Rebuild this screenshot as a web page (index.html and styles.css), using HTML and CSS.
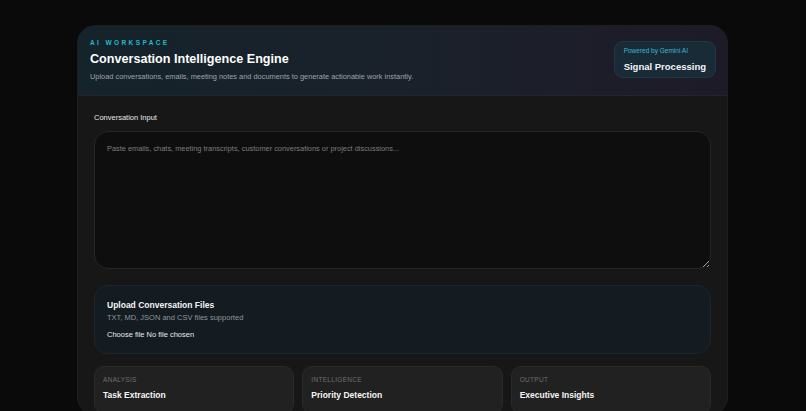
FILE: index.html
```html
<!DOCTYPE html>
<html lang="en">

<head>
  <meta charset="UTF-8">
  <meta name="viewport" content="width=device-width, initial-scale=1.0">
  <title>Conversation Intelligence Engine</title>

  <!-- Internal CSS file -->
  <link rel="stylesheet" href="styles.css">
</head>

<body>
  <main class="workspace">
    <header class="workspace-header">
      <div class="intro">
        <p class="eyebrow">AI WORKSPACE</p>
        <h1>Conversation Intelligence Engine</h1>
        <p class="lead">Upload conversations, emails, meeting notes and documents to generate actionable work instantly.</p>
      </div>
      <div class="badge">
        <span class="badge-small">Powered by Gemini AI</span>
        <span class="badge-title">Signal Processing</span>
      </div>
    </header>

    <section class="workspace-body">
      <label class="field-label" for="conversation">Conversation Input</label>
      <textarea id="conversation" class="conversation" placeholder="Paste emails, chats, meeting transcripts, customer conversations or project discussions..."></textarea>

      <div class="upload">
        <h2>Upload Conversation Files</h2>
        <p>TXT, MD, JSON and CSV files supported</p>
        <div class="file-row">Choose file No file chosen</div>
      </div>

      <div class="features">
        <div class="feature">
          <span class="feature-label">ANALYSIS</span>
          <span class="feature-title">Task Extraction</span>
        </div>
        <div class="feature">
          <span class="feature-label">INTELLIGENCE</span>
          <span class="feature-title">Priority Detection</span>
        </div>
        <div class="feature">
          <span class="feature-label">OUTPUT</span>
          <span class="feature-title">Executive Insights</span>
        </div>
      </div>
    </section>
  </main>
</body>

</html>
```

FILE: styles.css
```css
html {
  padding: 0;
  margin: 0;
  background: #0a0a0b;
}

body {
  margin: 0;
  padding: 25px 0 0 77px;
  font-family: "Liberation Sans", Arial, sans-serif;
  color: #f3f4f6;
  overflow: hidden;
}

.workspace {
  box-sizing: border-box;
  width: 651px;
  border-radius: 18px;
  overflow: hidden;
  background: #171717;
  border: 1px solid #1f1f22;
}

.workspace-header {
  display: flex;
  justify-content: space-between;
  align-items: flex-start;
  padding: 13px 11px 13px 12px;
  background: linear-gradient(90deg, #15232b 0%, #1a212a 50%, #1e1b28 100%);
  border-bottom: 1px solid #22252c;
}

.eyebrow {
  margin: 0;
  font-size: 6.5px;
  line-height: 8px;
  font-weight: 700;
  letter-spacing: 2.4px;
  color: #22b8d0;
}

h1 {
  margin: 4px 0 0;
  font-size: 12.6px;
  line-height: 16px;
  font-weight: 700;
  color: #ffffff;
}

.lead {
  margin: 5px 0 0;
  font-size: 7.4px;
  line-height: 10px;
  color: #9ea3ab;
}

.badge {
  display: flex;
  flex-direction: column;
  gap: 6px;
  margin-top: 2px;
  padding: 5px 9px 4px 9px;
  border-radius: 9px;
  background: #192b37;
  border: 1px solid #213744;
}

.badge-small {
  font-size: 6.5px;
  line-height: 8px;
  color: #3bb8d4;
}

.badge-title {
  font-size: 9.5px;
  line-height: 12px;
  font-weight: 700;
  color: #f3f4f6;
}

.workspace-body {
  padding: 17px 16px 0 16px;
}

.field-label {
  display: block;
  font-size: 7.5px;
  line-height: 10px;
  color: #e5e7eb;
  margin-bottom: 8px;
}

.conversation {
  display: block;
  box-sizing: border-box;
  width: 100%;
  height: 138px;
  padding: 12px 12px;
  border-radius: 14px;
  border: 1px solid #272727;
  background: #0e0e0e;
  color: #e5e7eb;
  font-family: "Liberation Sans", Arial, sans-serif;
  font-size: 7.4px;
  line-height: 10px;
  resize: vertical;
  outline: none;
}

.conversation::placeholder {
  color: #7d7d80;
}

.upload {
  margin-top: 16px;
  padding: 14px 12px 13px 12px;
  border-radius: 14px;
  background: #141c22;
  border: 1px solid #1c262d;
}

.upload h2 {
  margin: 0;
  font-size: 8.5px;
  line-height: 11px;
  font-weight: 700;
  color: #f5f5f5;
}

.upload p {
  margin: 2px 0 0;
  font-size: 7.5px;
  line-height: 10px;
  color: #8d949c;
}

.file-row {
  margin-top: 7px;
  font-size: 7.5px;
  line-height: 10px;
  color: #e5e7eb;
}

.features {
  display: grid;
  grid-template-columns: repeat(3, 1fr);
  gap: 8px;
  margin-top: 12px;
}

.feature {
  display: flex;
  flex-direction: column;
  gap: 6px;
  padding: 9px 8px 12px;
  border-radius: 10px;
  background: #212121;
  border: 1px solid #2a2a2a;
}

.feature-label {
  font-size: 6.5px;
  line-height: 8px;
  color: #6f6f72;
  letter-spacing: 0.3px;
}

.feature-title {
  font-size: 8.5px;
  line-height: 11px;
  font-weight: 700;
  color: #f5f5f5;
}
```
